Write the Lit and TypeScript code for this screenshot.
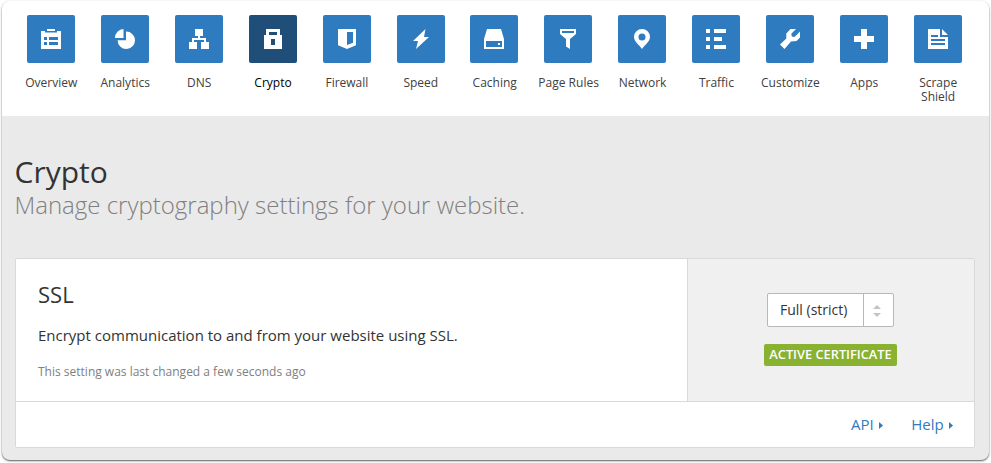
import { LitElement, html, css, svg } from "lit";
import { customElement } from "lit/decorators.js";
import { classMap } from "lit/directives/class-map.js";

const icons = {
  overview: svg`<path fill-rule="evenodd" d="M6 0h8v2H6zM0 2h4v1.500h12V2h4v18H0zM3 8v3h3V8zM8 8v3h9V8zM3 13v3h3v-3zM8 13v3h9v-3z"/>`,
  analytics: svg`<path d="M8.500 0v9H0A9 9 0 0 1 8.500 0zM11 2.600A8.700 8.700 0 1 1 2.600 11.300H11z"/>`,
  dns: svg`<path d="M6 0h8v7h-3v2h6v4h3v7h-8v-7h3v-2H5v2h3v7H0v-7h3V9h6V7H6z"/>`,
  crypto: svg`<path fill-rule="evenodd" d="M3 0h14v6h2v14H1V6h2zM6 3v3h8V3zM8 10v6h4v-6z"/>`,
  firewall: svg`<path fill-rule="evenodd" d="M1 0h18v16.200L10 20l-9-3.800zM10 3v13l6-2.200V3z"/>`,
  speed: svg`<path d="M14.500 0L2 12h5L5 20 18 8h-5z"/>`,
  caching: svg`<path fill-rule="evenodd" d="M3 0h14l3 10v10H0V10zM2 12v6h16v-6zM14 14h2v2h-2z"/>`,
  rules: svg`<path fill-rule="evenodd" d="M2 0h16v5l-6 5v10l-4-2.500V10L2 5zM4 2v2h12V2z"/>`,
  network: svg`<path fill-rule="evenodd" d="M10 20C8 16.500 2 13 2 8a8 8 0 0 1 16 0c0 5-6 8.500-8 12zM10 4.500a3.500 3.500 0 1 0 0 7 3.500 3.500 0 0 0 0-7z"/>`,
  traffic: svg`<path d="M0 0h4v4H0zM8 0h12v4H8zM0 8h4v4H0zM8 8h8v4H8zM0 16h4v4H0zM8 16h12v4H8z"/>`,
  customize: svg`<path d="M10.500 0H16L11.300 4.700 11.800 7.500 14.500 8 20 2.500V8.500L16.500 12 11 12.500 4.500 20 0 15.500 6.300 9.500V4.500z"/>`,
  apps: svg`<path d="M7 0h6v7h7v6h-7v7H7v-7H0V7h7z"/>`,
  scrape: svg`<path fill-rule="evenodd" d="M0 0h12v8h8v12H0zM3 6v2h7V6zM3 10v2h14v-2zM3 14v2h14v-2zM14 0l6 6h-6z"/>`,
};

const items: { label: string; icon: keyof typeof icons; active?: boolean }[] = [
  { label: "Overview", icon: "overview" },
  { label: "Analytics", icon: "analytics" },
  { label: "DNS", icon: "dns" },
  { label: "Crypto", icon: "crypto", active: true },
  { label: "Firewall", icon: "firewall" },
  { label: "Speed", icon: "speed" },
  { label: "Caching", icon: "caching" },
  { label: "Page Rules", icon: "rules" },
  { label: "Network", icon: "network" },
  { label: "Traffic", icon: "traffic" },
  { label: "Customize", icon: "customize" },
  { label: "Apps", icon: "apps" },
  { label: "Scrape Shield", icon: "scrape" },
];

@customElement("app-nav")
export class AppNav extends LitElement {
  static styles = css`
    :host { display: block; background: #fff; height: 115px; box-sizing: border-box; padding: 14px 14.2px 0 12.050px; }
    .row { display: grid; grid-template-columns: repeat(13, 1fr); }
    .item { display: flex; flex-direction: column; align-items: center; gap: 13px; color: #404040; font-size: 12px; line-height: 14px; text-align: center; }
    .active { color: #000; }
    .item span { padding-left: 0.6px; }
    .tile { width: 48px; height: 48px; border-radius: 2px; background: #2f7bbf; display: grid; place-items: center; }
    .active .tile { background: #1f4e79; }
    svg { width: 20px; height: 20px; fill: #fff; display: block; }
    .narrow { width: 50px; }
  `;
  render() {
    return html`<nav class="row">
      ${items.map(
        (i) => html`<div class=${classMap({ item: true, active: !!i.active })}>
          <div class="tile"><svg viewBox="0 0 20 20">${icons[i.icon]}</svg></div>
          <span class=${classMap({ narrow: i.icon === "scrape" })}>${i.label}</span>
        </div>`
      )}
    </nav>`;
  }
}

@customElement("setting-card")
export class SettingCard extends LitElement {
  static styles = css`
    :host { display: block; box-sizing: border-box; height: 190px; border: 1px solid #d9d9d9; border-radius: 2px; background: #fff; color: #333; }
    .main { display: flex; height: 142px; border-bottom: 1px solid #d9d9d9; }
    .info { flex: 1; padding: 21px 22px 0; }
    .name { margin: 0; font-size: 22px; line-height: 28px; font-weight: 400; }
    .desc { margin: 16px 0 0; font-size: 15px; line-height: 22px; }
    .note { margin: 17px 0 0; font-size: 12px; line-height: 18px; color: #808080; }
    .control { width: 287px; box-sizing: border-box; border-left: 1px solid #d9d9d9; background: #f0f0f0; display: flex; flex-direction: column; align-items: center; padding: 34px 1px 0 0; gap: 17px; }
    .select { width: 127px; height: 34px; box-sizing: border-box; border: 1px solid #b8b8b8; border-radius: 2px; background: #fff; display: flex; font-size: 14px; line-height: 32px; }
    .value { flex: 1; padding-left: 12px; }
    .stepper { width: 29px; border-left: 1px solid #b8b8b8; display: grid; place-items: center; }
    .stepper svg { width: 8px; height: 12px; fill: #c4c4c4; margin-left: -3px; margin-top: 2px; display: block; }
    .badge { width: 133px; height: 22px; border-radius: 2px; background: #88b22f; color: #fff; font-size: 12.8px; font-weight: 600; line-height: 21px; text-align: center; white-space: nowrap; }
    .links { display: flex; justify-content: flex-end; gap: 28px; padding: 11px 21px 0 0; font-size: 15px; line-height: 22px; color: #2f7bbf; }
    .link { display: flex; align-items: center; gap: 5.4px; }
    .link svg { width: 4px; height: 7px; fill: #2f7bbf; margin-top: 2px; }
  `;
  render() {
    const caret = html`<svg viewBox="0 0 4 7"><path d="M0 0l4 3.500-4 3.500z" /></svg>`;
    return html`
      <div class="main">
        <div class="info">
          <h2 class="name">SSL</h2>
          <p class="desc">Encrypt communication to and from your website using SSL.</p>
          <p class="note">This setting was last changed a few seconds ago</p>
        </div>
        <div class="control">
          <div class="select">
            <span class="value">Full (strict)</span>
            <span class="stepper"><svg viewBox="0 0 8 12"><path d="M4 0l4 4H0zM0 8h8l-4 4z" /></svg></span>
          </div>
          <div class="badge">ACTIVE CERTIFICATE</div>
        </div>
      </div>
      <div class="links"><a class="link">API ${caret}</a><a class="link">Help ${caret}</a></div>
    `;
  }
}

@customElement("app-root")
export class AppRoot extends LitElement {
  static styles = css`
    :host { display: block; box-sizing: border-box; height: 463px; padding: 1px 2px 3px; background: #fff; font-family: "Open Sans", sans-serif; overflow: hidden; }
    .window { height: 459px; border-radius: 8px; overflow: hidden; background: #eaeaea; box-shadow: 0 1px 2px rgba(0, 0, 0, 0.65); }
    .body { padding: 38px 14px 0 13px; }
    .title { margin: 0 0 0 -0.5px; font-size: 30px; line-height: 36px; font-weight: 400; color: #333; }
    .sub { margin: -1px 0 38px -0.5px; font-size: 24px; line-height: 31px; font-weight: 300; color: #808080; }
  `;
  render() {
    return html`<div class="window">
      <app-nav></app-nav>
      <main class="body">
        <h1 class="title">Crypto</h1>
        <p class="sub">Manage cryptography settings for your website.</p>
        <setting-card></setting-card>
      </main>
    </div>`;
  }
}
